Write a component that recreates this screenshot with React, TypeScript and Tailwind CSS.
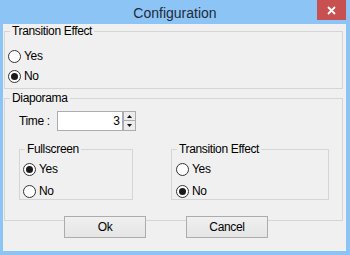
import React from "react";

function Radio({ checked, label }: { checked?: boolean; label: string }) {
  return (
    <div className="flex items-center h-[16px]">
      <span className="w-[13px] h-[13px] rounded-full border border-[#333333] bg-white flex items-center justify-center shrink-0">
        {checked && <span className="w-[7px] h-[7px] rounded-full bg-[#1a1a1a]" />}
      </span>
      <span className="ml-[3px] text-[12px] leading-[14px] tracking-[-0.35px] text-black">{label}</span>
    </div>
  );
}

function Group({
  title,
  className,
  children,
}: {
  title: string;
  className?: string;
  children: React.ReactNode;
}) {
  return (
    <fieldset className={"border border-[#d5d5d5] " + (className ?? "")}>
      <legend className="ml-[5px] px-[2px] text-[12px] leading-[14px] tracking-[-0.35px] text-black">{title}</legend>
      {children}
    </fieldset>
  );
}

function Btn({ label }: { label: string }) {
  return (
    <button className="w-[82px] h-[22px] border border-[#acacac] bg-gradient-to-b from-[#f0f0f0] to-[#e5e5e5] text-[12px] leading-[14px] tracking-[-0.35px] text-black">
      {label}
    </button>
  );
}

export default function App() {
  return (
    <div className="w-[350px] h-[255px] bg-[#8cc4f6] flex flex-col pl-[3px] pr-[4px] pb-[4px] font-['Segoe_UI','Liberation_Sans',sans-serif]">
      <div className="relative h-[24px] -ml-[3px] -mr-[4px] flex items-center justify-center">
        <span className="text-[14px] leading-[16px] text-[#1f2b38] pt-[1px]">Configuration</span>
        <div className="absolute right-[4px] top-0 w-[29px] h-[20px] bg-[#c75050] flex items-center justify-center">
          <svg width="9" height="9" viewBox="0 0 9 9">
            <path d="M1 1 L8 8 M8 1 L1 8" stroke="white" strokeWidth="1.8" />
          </svg>
        </div>
      </div>
      <div className="flex-1 bg-[#f0f0f0] flex flex-col">
        <Group title="Transition Effect" className="ml-[1px] mr-[3px] pt-[10px] pb-[4px]">
          <div className="flex flex-col gap-[4px] pl-[3px]">
            <Radio label="Yes" />
            <Radio checked label="No" />
          </div>
        </Group>
        <Group title="Diaporama" className="ml-[1px] mr-[3px] mt-[2px] pb-[20px]">
          <div className="flex items-center h-[20px] mt-[6px] pl-[14px]">
            <span className="text-[12px] leading-[14px] tracking-[-0.35px] text-black w-[38px]">Time :</span>
            <div className="w-[66px] h-[20px] border border-[#abadb3] bg-white flex items-center justify-end pr-[2px] text-[12px] leading-[14px] text-black">
              3
            </div>
            <div className="flex flex-col w-[13px] h-[20px]">
              <div className="h-[10px] border border-[#acacac] bg-[#ececec] flex items-center justify-center">
                <svg width="5" height="3" viewBox="0 0 5 3">
                  <path d="M0 3 L2.5 0 L5 3 Z" fill="#111" />
                </svg>
              </div>
              <div className="h-[10px] border border-t-0 border-[#acacac] bg-[#ececec] flex items-center justify-center">
                <svg width="5" height="3" viewBox="0 0 5 3">
                  <path d="M0 0 L5 0 L2.5 3 Z" fill="#111" />
                </svg>
              </div>
            </div>
          </div>
          <div className="flex mt-[11px] pl-[14px] gap-[38px]">
            <Group title="Fullscreen" className="w-[114px] pt-[5px]">
              <div className="flex flex-col gap-[6px] pl-[3px]">
                <Radio checked label="Yes" />
                <Radio label="No" />
              </div>
            </Group>
            <Group title="Transition Effect" className="w-[158px] pt-[5px]">
              <div className="flex flex-col gap-[6px] pl-[4px]">
                <Radio label="Yes" />
                <Radio checked label="No" />
              </div>
            </Group>
          </div>
        </Group>
        <div className="flex pl-[61px] gap-[40px] -mt-[5px]">
          <Btn label="Ok" />
          <Btn label="Cancel" />
        </div>
      </div>
    </div>
  );
}
